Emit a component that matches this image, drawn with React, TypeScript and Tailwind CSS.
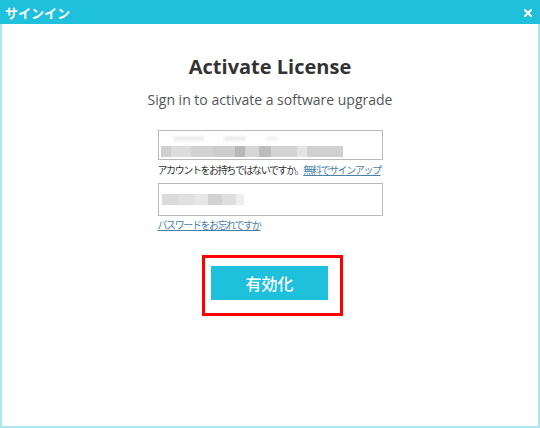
const jp = { fontFamily: '"Noto Sans CJK JP", "Noto Sans", sans-serif' };
const latin = { fontFamily: '"Open Sans", "Noto Sans CJK JP", sans-serif' };

function Blur({ w, shade }: { w: number; shade: string }) {
  return <div className={`h-[11px] ${shade}`} style={{ width: w }} />;
}

export default function App() {
  return (
    <div className="w-[540px] h-[428px] flex flex-col bg-white overflow-hidden">
      {/* title bar */}
      <div className="h-[24px] bg-[#1ec0dc] flex items-center justify-between pl-[5px] pr-[8px] shrink-0">
        <span className="text-white text-[13px] font-bold leading-none" style={jp}>
          サインイン
        </span>
        <svg width="8" height="8" viewBox="0 0 8 8" className="mt-[1px]">
          <path d="M1 1L7 7M7 1L1 7" stroke="white" strokeWidth="2" strokeLinecap="square" />
        </svg>
      </div>

      {/* body */}
      <div className="flex-1 flex flex-col items-center border-x-2 border-b-2 border-[#a9e7f1]">
        <h1 className="pt-[31px] text-[20px] leading-[24px] font-bold text-[#333333]" style={latin}>
          Activate License
        </h1>
        <p className="mt-[11px] text-[14px] leading-[20px] text-[#555555]" style={latin}>
          Sign in to activate a software upgrade
        </p>

        <div className="mt-[20px] w-[225px] flex flex-col">
          {/* email */}
          <div className="h-[30px] border border-[#b9b9b9] relative">
            <div className="absolute left-[15px] top-[5px] flex gap-[20px] blur-[1px] opacity-60">
              <div className="w-[30px] h-[5px] bg-[#e2e2e2]" />
              <div className="w-[22px] h-[5px] bg-[#e2e2e2]" />
              <div className="w-[12px] h-[5px] bg-[#ececec]" />
            </div>
            <div className="absolute left-[2px] top-[15px] flex blur-[0.6px]">
              <Blur w={10} shade="bg-[#cfcfcf]" />
              <Blur w={20} shade="bg-[#dcdcdc]" />
              <Blur w={22} shade="bg-[#d2d2d2]" />
              <Blur w={22} shade="bg-[#cdcdcd]" />
              <Blur w={10} shade="bg-[#b8b8b8]" />
              <Blur w={14} shade="bg-[#d6d6d6]" />
              <Blur w={12} shade="bg-[#bdbdbd]" />
              <Blur w={26} shade="bg-[#d4d4d4]" />
              <Blur w={10} shade="bg-[#e4e4e4]" />
              <Blur w={36} shade="bg-[#d0d0d0]" />
            </div>
          </div>
          <p className="mt-[3px] text-[10px] leading-[14px] text-[#333333] whitespace-nowrap tracking-[-1.4px]" style={jp}>
            アカウントをお持ちではないですか。
            <span className="text-[#4a7fa8] underline">無料でサインアップ</span>
          </p>

          {/* password */}
          <div className="mt-[6px] h-[33px] border border-[#b9b9b9] relative">
            <div className="absolute left-[3px] top-[10px] flex blur-[0.6px]">
              <Blur w={16} shade="bg-[#dadada]" />
              <Blur w={16} shade="bg-[#e0e0e0]" />
              <Blur w={14} shade="bg-[#e6e6e6]" />
              <Blur w={14} shade="bg-[#d2d2d2]" />
              <Blur w={14} shade="bg-[#dedede]" />
              <Blur w={8} shade="bg-[#eeeeee]" />
            </div>
          </div>
          <p className="mt-[2px] text-[10px] leading-[14px] text-[#4a7fa8] underline tracking-[-1.4px]" style={jp}>
            パスワードをお忘れですか
          </p>
        </div>

        {/* highlighted button */}
        <div className="mt-[23px] ml-[5px] border-[3px] border-[#ff0000] pl-[6px] pr-[12px] pt-[8px] pb-[13px]">
          <button
            className="w-[117px] h-[34px] bg-[#1ec0dc] text-white text-[16px] font-medium flex items-center justify-center"
            style={jp}
          >
            有効化
          </button>
        </div>
      </div>
    </div>
  );
}
